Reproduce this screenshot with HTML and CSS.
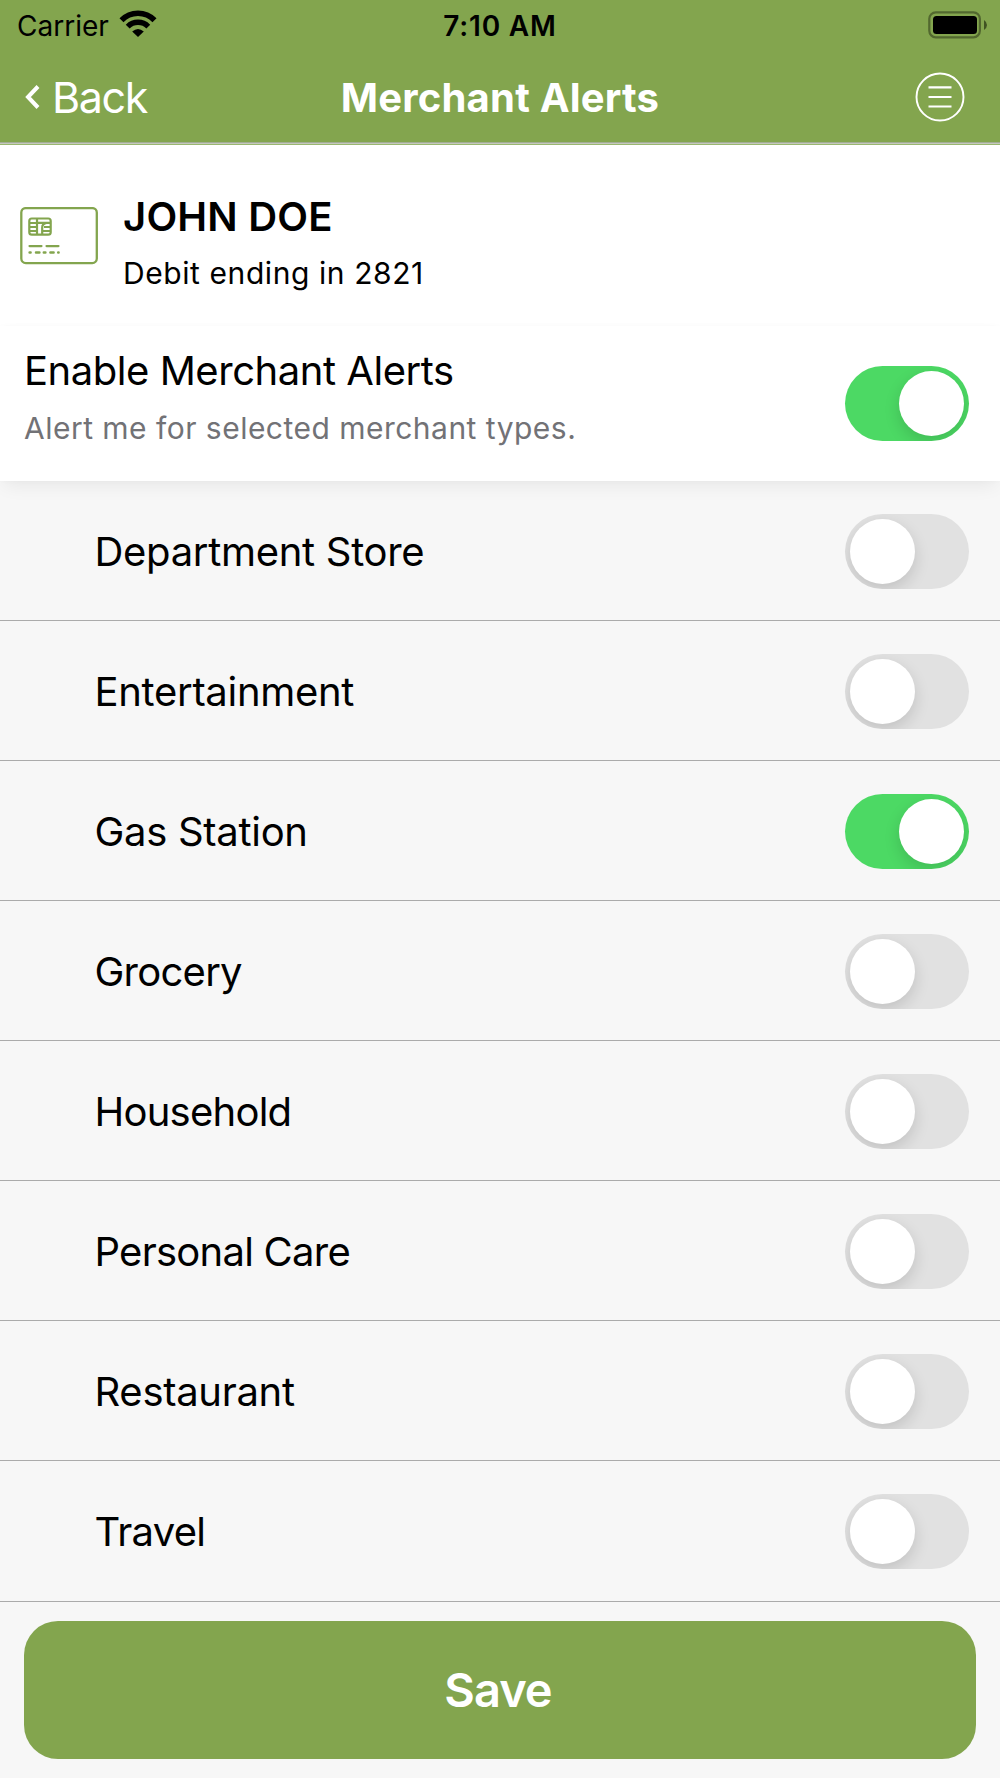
FILE: index.html
```html
<!DOCTYPE html>
<html lang="en">
<head>
    <meta charset="UTF-8">
    <meta name="viewport" content="width=device-width, initial-scale=1.0">
    <title>Merchant Alerts</title>
    <link rel="stylesheet" href="styles.css">
</head>
<body>
    <header class="header">
        <div class="status-bar">
            <div class="status-left">
                <span class="carrier">Carrier</span>
                <svg class="wifi" width="38" height="28" viewBox="0 0 38 28">
                    <path d="M2.5 10.3A23 23 0 0 1 35.5 10.3" fill="none" stroke="#000" stroke-width="5.6"/>
                    <path d="M8.7 16.6A14.5 14.5 0 0 1 29.3 16.6" fill="none" stroke="#000" stroke-width="5.4"/>
                    <path d="M13.2 21.4Q19 16.4 24.8 21.4L19 27Z" fill="#000"/>
                </svg>
            </div>
            <span class="time">7:10 AM</span>
            <svg class="battery" width="60" height="28" viewBox="0 0 60 28">
                <rect x="1.3" y="1.3" width="50.6" height="25" rx="6.5" fill="none" stroke="#52682f" stroke-width="2.2"/>
                <rect x="5" y="5" width="44" height="18" rx="3.5" fill="#000"/>
                <path d="M56 9Q59 11 59 14T56 19Z" fill="#405322"/>
            </svg>
        </div>
        <nav class="nav">
            <a class="back" href="#">
                <svg width="15" height="24" viewBox="0 0 15 24">
                    <path d="M13 1.5L3 12L13 22.5" fill="none" stroke="#fff" stroke-width="4"/>
                </svg>
                <span>Back</span>
            </a>
            <h1 class="title">Merchant Alerts</h1>
            <a class="menu" href="#">
                <svg width="50" height="50" viewBox="0 0 50 50" fill="none" stroke="#fff">
                    <circle cx="25" cy="25" r="23.5" stroke-width="1.9"/>
                    <path d="M13.5 15.3H36.5M13.5 25H36.5M13.5 34.5H36.5" stroke-width="2.2"/>
                </svg>
            </a>
        </nav>
        <div class="hairline"></div>
    </header>

    <section class="account">
        <svg class="card-icon" width="79" height="58" viewBox="0 0 79 58" fill="none" stroke="#83a54e" stroke-width="2.2">
            <rect x="1.3" y="1.1" width="75.5" height="55" rx="4.5" stroke-width="2.3"/>
            <rect x="9.3" y="11.5" width="21.4" height="16.2" rx="2.5"/>
            <path d="M9 16H16.5M9 20H16.5M9 24H16.5M17 12V28M17 15.8H31M31 20H24M22.2 28V20.5Q22.2 16.6 26.5 15.8M22.5 24H31"/>
            <path d="M9.5 39.1H21.5M26.5 39.1H38.5" stroke-linecap="round"/>
            <path d="M9.6 45.6H10.6M16 45.6H19.4M23.8 45.6H25.4M30.4 45.6H33.6M38.2 45.6H38.6" stroke-width="2.5" stroke-linecap="round"/>
        </svg>
        <div>
            <h2 class="name">JOHN DOE</h2>
            <p class="card-number">Debit ending in 2821</p>
        </div>
    </section>

    <section class="enable">
        <div>
            <h3 class="enable-title">Enable Merchant Alerts</h3>
            <p class="enable-text">Alert me for selected merchant types.</p>
        </div>
        <div class="toggle on"></div>
    </section>

    <ul class="merchants">
        <li><span>Department Store</span><div class="toggle"></div></li>
        <li><span>Entertainment</span><div class="toggle"></div></li>
        <li><span>Gas Station</span><div class="toggle on"></div></li>
        <li><span class="tight">Grocery</span><div class="toggle"></div></li>
        <li><span class="tight">Household</span><div class="toggle"></div></li>
        <li><span class="tight">Personal Care</span><div class="toggle"></div></li>
        <li><span>Restaurant</span><div class="toggle"></div></li>
        <li><span class="tight">Travel</span><div class="toggle"></div></li>
    </ul>

    <footer class="footer">
        <button type="button" class="save">Save</button>
    </footer>
</body>
</html>
```

FILE: styles.css
```css
* {
    box-sizing: border-box;
}
body {
    margin: 0;
    height: 1778px;
    overflow: hidden;
    font-family: Inter, "Liberation Sans", sans-serif;
    background-color: #f7f7f7;
    color: #000;
}
h1, h2, h3, p, ul {
    margin: 0;
    padding: 0;
    font-weight: 400;
}
svg {
    display: block;
}
a {
    color: white;
    text-decoration: none;
}
.header {
    background-color: #83a54e;
}
.status-bar {
    display: grid;
    grid-template-columns: 1fr auto 1fr;
    align-items: center;
    height: 51px;
    padding: 0 12px;
    font-size: 28px;
    line-height: 50px;
}
.status-left {
    display: flex;
    align-items: center;
    gap: 10px;
    padding-left: 5px;
}
.wifi {
    margin-top: -4px;
}
.time {
    font-size: 28px;
    font-weight: 600;
    letter-spacing: 0.8px;
}
.battery {
    justify-self: end;
    margin-top: -2px;
}
.nav {
    display: grid;
    grid-template-columns: 1fr auto 1fr;
    align-items: center;
    height: 91px;
    padding: 0 25px;
}
.back {
    display: flex;
    align-items: center;
    gap: 12px;
    font-size: 43px;
    letter-spacing: -1.4px;
    line-height: 60px;
}
.title {
    padding-top: 2px;
    color: white;
    font-size: 40px;
    font-weight: 700;
    letter-spacing: 0.2px;
    line-height: 60px;
}
.menu {
    justify-self: end;
    margin: 0 10px 0 0;
}
.hairline {
    height: 3px;
    background-color: #c4c8be;
    border-top: 1px solid #a3ad94;
    border-bottom: 1px solid #9ab76f;
}
.account {
    display: flex;
    gap: 24px;
    height: 181px;
    padding: 47px 20px 0;
    background-color: white;
}
.card-icon {
    margin-top: 15px;
}
.name {
    font-size: 40px;
    font-weight: 600;
    letter-spacing: 0.2px;
    line-height: 50px;
}
.card-number {
    margin-top: 11px;
    font-size: 30px;
    letter-spacing: 0.58px;
    line-height: 40px;
}
.enable {
    position: relative;
    display: flex;
    justify-content: space-between;
    align-items: center;
    height: 155px;
    padding: 0 31px 0 24px;
    background-color: white;
    box-shadow: 0 8px 18px -4px rgba(0,0,0,0.07), 0 0 6px rgba(0,0,0,0.02);
}
.enable-title {
    margin-top: -13px;
    font-size: 40px;
    letter-spacing: -0.46px;
    line-height: 50px;
}
.enable-text {
    margin-top: 12px;
    color: #727276;
    font-size: 30px;
    letter-spacing: 0.48px;
    line-height: 40px;
}
.toggle {
    flex: none;
    width: 124px;
    height: 75px;
    padding: 5px;
    border-radius: 38px;
    background-color: #e1e1e1;
    overflow: hidden;
}
.toggle::before {
    content: "";
    display: block;
    width: 65px;
    height: 65px;
    border-radius: 50%;
    background-color: white;
    box-shadow: 0 6px 16px rgba(0,0,0,0.14);
}
.toggle.on {
    background-color: #4cd964;
}
.toggle.on::before {
    margin-left: 49px;
}
.merchants {
    list-style: none;
}
.merchants li {
    display: flex;
    justify-content: space-between;
    align-items: center;
    height: 140.07px;
    padding: 2px 31px 0 94.5px;
    border-bottom: 1px solid #ababab;
    font-size: 40px;
    letter-spacing: -0.3px;
}
.merchants .tight {
    letter-spacing: -0.75px;
}
.footer {
    padding: 19px 24px;
}
.save {
    display: block;
    width: 952px;
    height: 138px;
    padding: 0 4px 0 0;
    border: none;
    border-radius: 34px;
    background-color: #83a54e;
    color: white;
    font-family: inherit;
    font-size: 47px;
    font-weight: 600;
    letter-spacing: -1px;
}
```
